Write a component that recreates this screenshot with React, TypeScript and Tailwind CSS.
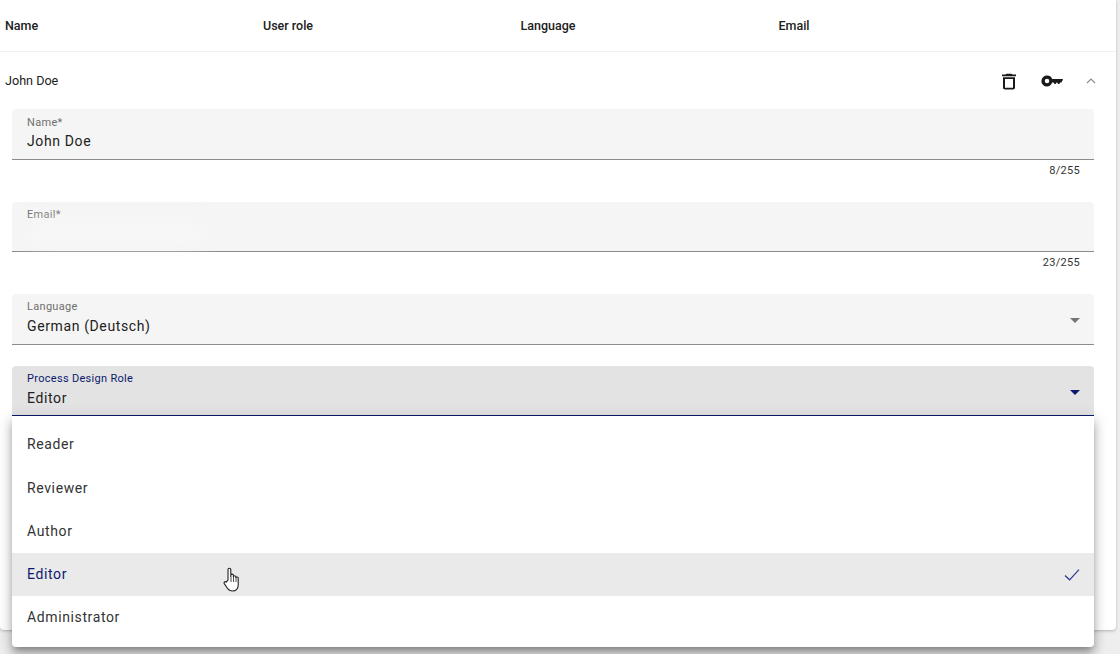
import React from "react";

function TrashIcon() {
  return (
    <svg width="24" height="21" viewBox="0 0 24 24" preserveAspectRatio="none" fill="#1a1a1a">
      <path d="M6 19c0 1.1.9 2 2 2h8c1.1 0 2-.9 2-2V7H6v12zM8 9h8v10H8V9zm7.5-5l-1-1h-5l-1 1H5v2h14V4h-3.5z" />
    </svg>
  );
}

function KeyIcon() {
  return (
    <svg width="24" height="24" viewBox="0 0 24 24" fill="#1a1a1a" fillRule="evenodd">
      <path d="M7 6.5a5.5 5.5 0 0 1 5.2 3.4H22.6l.4.5-1.6 3.1h-1.2l-.9 1.5h-1.2l-.9-1.5h-.6l-.9 1.5h-1.2l-.9-1.5h-1.4A5.5 5.5 0 1 1 7 6.5zM7 9.7a2.3 2.3 0 1 0 0 4.6 2.3 2.3 0 0 0 0-4.6z" />
    </svg>
  );
}

function Field({
  label,
  value,
  counter,
  select,
  active,
  blurred,
  heightClass,
  labelPadClass,
  valueGapClass,
}: {
  label: string;
  value?: string;
  counter?: string;
  select?: boolean;
  active?: boolean;
  blurred?: boolean;
  heightClass: string;
  labelPadClass: string;
  valueGapClass: string;
}) {
  return (
    <div>
      <div
        className={`relative rounded-t-[4px] px-[15px] ${heightClass} border-b ${
          active ? "bg-[#e3e3e3] border-[#0b1a6e]" : "bg-[#f5f5f5] border-[#8c8c8c]"
        }`}
      >
        <div
          className={`${labelPadClass} text-[11px] leading-[13px] tracking-[0.3px] ${
            active ? "text-[#0b1a6e]" : "text-[#6f6f6f]"
          }`}
        >
          {label}
        </div>
        <div className={`${valueGapClass} text-[14px] leading-[20px] tracking-[0.62px] text-[#212121]`}>{value}</div>
        {blurred && (
          <div className="absolute left-[15px] top-[20px] h-[22px] w-[180px] rounded-full bg-[#f7f7f7] blur-sm" />
        )}
        {select && (
          <div
            className={`absolute right-[14px] top-[24px] h-0 w-0 border-x-[5px] border-t-[5px] border-x-transparent ${
              active ? "border-t-[#0b1a6e]" : "border-t-[#757575]"
            }`}
          />
        )}
      </div>
      {counter && (
        <div className="pr-[14px] pt-[4px] text-right text-[11px] leading-[14px] tracking-[0.3px] text-[#333333]">
          {counter}
        </div>
      )}
    </div>
  );
}

const options = ["Reader", "Reviewer", "Author", "Editor", "Administrator"];

export default function App() {
  return (
    <div
      className="h-[654px] w-[1120px] overflow-hidden bg-[#eeeeee]"
      style={{ fontFamily: "Roboto, sans-serif" }}
    >
      <div className="relative h-[630px] w-[1116px] rounded-b-[4px] bg-white shadow-[0_1px_3px_rgba(0,0,0,0.25)]">
        <div className="grid h-[52px] grid-cols-[258px_257.5px_258px_1fr] items-center border-b border-[#f0f0f0] pl-[5px] pt-[2px] text-[12.5px] font-medium text-[#212121]">
          <div>Name</div>
          <div>User role</div>
          <div>Language</div>
          <div>Email</div>
        </div>

        <div className="flex h-[57px] items-start pl-[5px] pr-[18px]">
          <div className="pt-[20px] text-[12.6px] leading-[18px] text-[#212121]">John Doe</div>
          <div className="ml-auto flex items-center pt-[17px]">
            <TrashIcon />
            <div className="ml-[19px]">
              <KeyIcon />
            </div>
            <svg className="ml-[20px] -mt-[1px]" width="14" height="14" viewBox="0 0 14 14" fill="none" stroke="#8a8a8a" strokeWidth="1.1">
              <path d="M3 9l4-4 4 4" />
            </svg>
          </div>
        </div>

        <div className="relative px-[12px] pr-[22px]">
          <Field label="Name*" value="John Doe" counter="8/255" heightClass="h-[51px]" labelPadClass="pt-[7px]" valueGapClass="mt-[2px]" />
          <div className="mt-[24px]">
            <Field label="Email*" value={"\u00a0"} counter="23/255" blurred heightClass="h-[50px]" labelPadClass="pt-[6px]" valueGapClass="mt-[3px]" />
          </div>
          <div className="mt-[24px]">
            <Field label="Language" value="German (Deutsch)" select heightClass="h-[51px]" labelPadClass="pt-[6px]" valueGapClass="mt-[3px]" />
          </div>
          <div className="relative mt-[21px]">
            <Field label="Process Design Role" value="Editor" select active heightClass="h-[50px]" labelPadClass="pt-[6px]" valueGapClass="mt-[3px]" />
            <div className="absolute left-0 right-0 top-[50px] z-10 rounded-b-[4px] bg-white pb-[8px] pt-[7px] shadow-[0_5px_6px_-3px_rgba(0,0,0,0.3),0_8px_10px_1px_rgba(0,0,0,0.16),0_3px_14px_2px_rgba(0,0,0,0.14)]">
              {options.map((o) => (
                <div
                  key={o}
                  className={`relative flex items-center px-[15px] text-[14px] tracking-[0.62px] ${
                    o === "Reader" ? "h-[44px] pb-[1px]" : "h-[43px]"
                  } ${o === "Editor" ? "bg-[#eaeaea] text-[#0b1a6e]" : "text-[#333333]"}`}
                >
                  {o}
                  {o === "Editor" && (
                    <svg className="ml-auto -mr-[1px]" width="16" height="16" viewBox="0 0 16 16" fill="none" stroke="#2b3a8c" strokeWidth="1.2">
                      <path d="M1 8.5l4.6 4.3L15 2.6" />
                    </svg>
                  )}
                  {o === "Editor" && (
                    <svg className="absolute left-[211px] top-[14px]" width="18" height="26" viewBox="0 0 18 26" fill="#ffffff" stroke="#222222" strokeWidth="1.1">
                      <path d="M5 13V2.6a1.4 1.4 0 012.8 0V10l0-1.6a1.3 1.3 0 012.6 0V10a1.2 1.2 0 012.4 0v1a1.2 1.2 0 012.4.4V18c0 3.4-2.2 6-5.6 6-2.6 0-4-1-5.4-3L1.3 16.6c-.8-1.3.9-2.6 1.9-1.5z" />
                      <path d="M8 10v5M10.5 10v5M13 11v4" fill="none" strokeWidth="0.8" />
                    </svg>
                  )}
                </div>
              ))}
            </div>
          </div>
        </div>
      </div>
    </div>
  );
}
